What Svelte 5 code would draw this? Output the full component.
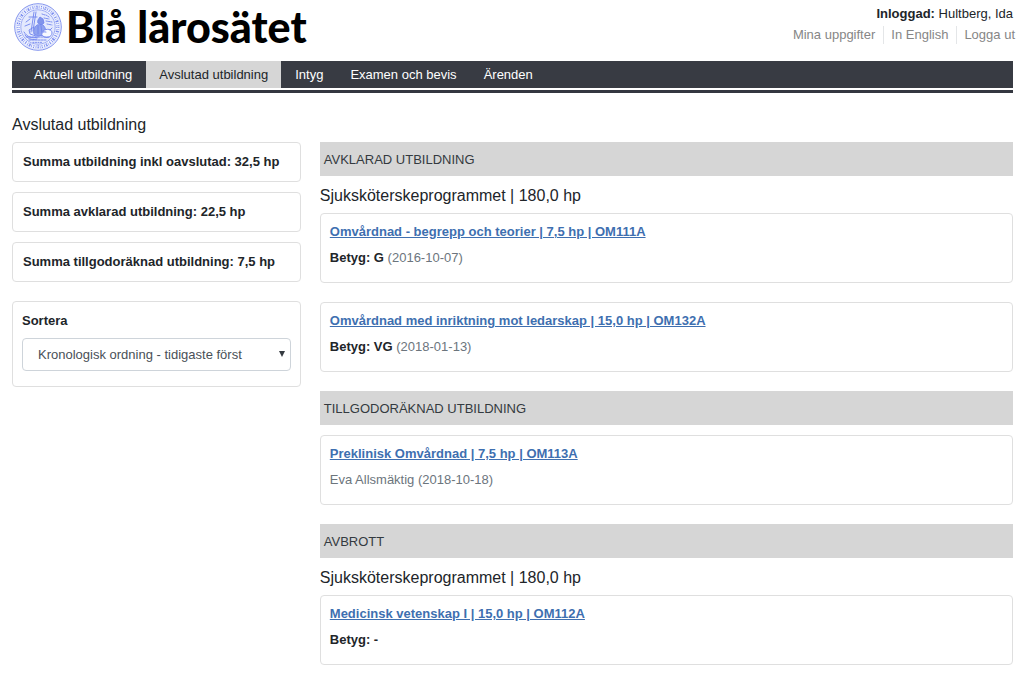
<script lang="ts">
  interface Course {
    title: string;
    grade?: string;
    note?: string;
  }

  interface Section {
    heading: string;
    program?: string;
    courses: Course[];
  }

  const menu = ['Aktuell utbildning', 'Avslutad utbildning', 'Intyg', 'Examen och bevis', 'Ärenden'];
  const userLinks = ['Mina uppgifter', 'In English', 'Logga ut'];

  const totals = [
    'Summa utbildning inkl oavslutad: 32,5 hp',
    'Summa avklarad utbildning: 22,5 hp',
    'Summa tillgodoräknad utbildning: 7,5 hp'
  ];

  const sections: Section[] = [
    {
      heading: 'AVKLARAD UTBILDNING',
      program: 'Sjuksköterskeprogrammet | 180,0 hp',
      courses: [
        { title: 'Omvårdnad - begrepp och teorier | 7,5 hp | OM111A', grade: 'G', note: '(2016-10-07)' },
        { title: 'Omvårdnad med inriktning mot ledarskap | 15,0 hp | OM132A', grade: 'VG', note: '(2018-01-13)' }
      ]
    },
    {
      heading: 'TILLGODORÄKNAD UTBILDNING',
      courses: [{ title: 'Preklinisk Omvårdnad | 7,5 hp | OM113A', note: 'Eva Allsmäktig (2018-10-18)' }]
    },
    {
      heading: 'AVBROTT',
      program: 'Sjuksköterskeprogrammet | 180,0 hp',
      courses: [{ title: 'Medicinsk vetenskap I | 15,0 hp | OM112A', grade: '-' }]
    }
  ];

  let active = $state('Avslutad utbildning');
  let order = $state('first');
</script>

<div class="page">
  <header class="top">
    <div class="brand">
      <svg class="seal" viewBox="0 0 48 48" aria-hidden="true">
        <circle cx="24" cy="24" r="23.3" fill="#f1f4fe" stroke="#8293ee" stroke-width="1" />
        <circle cx="24" cy="24" r="22" fill="none" stroke="#cdd5fa" stroke-width="0.6" />
        <!-- lettering band -->
        <circle cx="24" cy="24" r="19.8" fill="none" stroke="#7a8cf0" stroke-width="3" stroke-dasharray="1 1.3 0.6 0.9 1.6 1.1 0.7 1.5" />
        <circle cx="24" cy="24" r="19.8" fill="none" stroke="#f1f4fe" stroke-width="0.8" stroke-dasharray="2 3" />
        <circle cx="24" cy="24" r="17.2" fill="#e4e9fd" stroke="#8a9bf0" stroke-width="0.8" />
        <g fill="none" stroke="#7084ee" stroke-width="0.9" stroke-linecap="round" stroke-linejoin="round">
          <path d="M20 9 L17 29 M22 9 L19 28 M15 14 h8 M12 19 l4-3 M11 23 l5-2" />
          <path d="M28 11 l3 1 M32 12 l3 2 M30 15 l5 1 M32 18 l6 1 M33 21 l5 1" stroke-dasharray="1.5 1" />
          <path d="M24 17 l2-3 3 2 1 4 -3 2 -3-2z" fill="#8194ea" />
          <path d="M23 22 c-3 2-4 6-3 9 l4 2 6-1 c3-3 2-7-1-10z" fill="#91a3ee" />
          <path d="M20 24 l-5 3 1 4 6 2 M24 23 v8 M27 23 l1 7" />
          <path d="M10 29 c3 5 8 7 14 5 M11 32 c4 5 8 5 12 4" />
          <path d="M29 28 c4-3 9-2 9 2 c0 4-6 6-9 3 c-3-2 0-5 3-4 M36 27 l2-2" fill="#f7f9ff" />
          <path d="M12 34 h24 M15 37 h18" stroke-dasharray="2 1" />
          <path d="M19 39.4 h10" stroke-dasharray="1 1.5" />
        </g>
      </svg>
      <span class="brand-name">Blå lärosätet</span>
    </div>
    <div class="user">
      <div class="user-name"><strong>Inloggad:</strong> Hultberg, Ida</div>
      <ul class="user-links">
        {#each userLinks as link}
          <li><a href="#top">{link}</a></li>
        {/each}
      </ul>
    </div>
  </header>

  <nav class="menu">
    {#each menu as item}
      <a href="#menu" class:active={item === active} onclick={() => (active = item)}>{item}</a>
    {/each}
  </nav>

  <h1>Avslutad utbildning</h1>

  <div class="columns">
    <aside>
      {#each totals as total}
        <div class="box total">{total}</div>
      {/each}

      <div class="box sort">
        <label for="sort-order">Sortera</label>
        <div class="select-wrap">
          <select id="sort-order" bind:value={order}>
            <option value="first">Kronologisk ordning - tidigaste först</option>
            <option value="last">Kronologisk ordning - senaste först</option>
          </select>
          <svg class="arrow" viewBox="0 0 6 6" aria-hidden="true"><path d="M0 0h6L3 6z" fill="#343a40" /></svg>
        </div>
      </div>
    </aside>

    <main>
      {#each sections as section}
        <section>
          <h2>{section.heading}</h2>
          {#if section.program}
            <h3>{section.program}</h3>
          {/if}
          <div class="courses" class:no-program={!section.program}>
            {#each section.courses as course}
              <article class="box course">
                <a href="#course">{course.title}</a>
                <p>
                  {#if course.grade}<strong>Betyg: {course.grade}</strong>{/if}
                  {#if course.note}<span>{course.note}</span>{/if}
                </p>
              </article>
            {/each}
          </div>
        </section>
      {/each}
    </main>
  </div>
</div>

<style>
  :global(body) {
    background: #fff;
  }

  .page {
    padding: 0 10px 11px 12px;
    font-family: 'Liberation Sans', Arial, sans-serif;
    font-size: 13px;
    line-height: 20px;
    color: #212529;
  }

  .top {
    display: flex;
    justify-content: space-between;
    height: 61px;
  }

  .brand {
    display: flex;
    align-items: center;
    gap: 4px;
    height: 54px;
    padding-left: 2px;
  }

  .seal {
    width: 48px;
    height: 48px;
  }

  .brand-name {
    font-family: Lato, sans-serif;
    font-size: 43px;
    font-weight: 900;
    line-height: 54px;
    color: #000;
    white-space: nowrap;
  }

  .user {
    padding-top: 4px;
    text-align: right;
  }

  .user-links {
    display: flex;
    justify-content: flex-end;
    margin: 2px -2px 0 0;
    padding: 0;
    list-style: none;
  }

  .user-links li {
    padding: 0 8px 0 7px;
    line-height: 18px;
    border-left: 1px solid #e4e6e8;
  }

  .user-links li:first-child {
    border-left: 0;
  }

  .user-links li:last-child {
    padding-right: 0;
  }

  .user-links a {
    color: #868686;
    text-decoration: none;
  }

  .menu {
    display: flex;
    gap: 1px;
    padding-left: 9px;
    background: #383b43;
    border-bottom: 2px solid #fff;
    box-shadow: 0 3px 0 #343740;
  }

  .menu a {
    padding: 0 13px;
    line-height: 27px;
    color: #fff;
    text-decoration: none;
  }

  .menu a.active {
    background: #d6d6d6;
    color: #212529;
  }

  h1,
  h3 {
    font-size: 16px;
    font-weight: 400;
    line-height: 20px;
  }

  h1 {
    margin: 25px 0 7px;
  }

  .columns {
    display: grid;
    grid-template-columns: 5fr 12fr;
    gap: 19px;
    align-items: start;
  }

  .box {
    border: 1px solid #dfdfdf;
    border-radius: 4px;
  }

  .total {
    margin-bottom: 10px;
    padding: 9px 10px;
    font-weight: 700;
  }

  .sort {
    margin-top: 19px;
    padding: 9px 9px 15px;
  }

  .sort label {
    display: block;
    margin-bottom: 7px;
    font-weight: 700;
  }

  .select-wrap {
    position: relative;
  }

  select {
    display: block;
    width: 100%;
    height: 33px;
    padding: 0 15px;
    border: 1px solid #ced4da;
    border-radius: 4px;
    background: #fff;
    color: #495057;
    font: inherit;
    appearance: none;
  }

  .arrow {
    position: absolute;
    top: 13px;
    right: 6px;
    width: 6px;
    height: 6px;
    pointer-events: none;
  }

  section {
    margin-bottom: 19px;
  }

  section:last-child {
    margin-bottom: 0;
  }

  h2 {
    margin: 0;
    padding: 8px 4px 6px;
    background: #d6d6d6;
    color: #343a40;
    font-size: 13px;
    font-weight: 400;
    line-height: 20px;
  }

  h3 {
    margin: 10px 0 7px;
  }

  .courses {
    display: flex;
    flex-direction: column;
    gap: 19px;
  }

  .no-program {
    margin-top: 10px;
  }

  .course {
    padding: 8px 9px 14px;
  }

  .course a {
    color: #3e6fb0;
    font-weight: 700;
    text-decoration: underline;
  }

  .course p {
    margin: 6px 0 0;
  }

  .course span {
    color: #6c757d;
  }
</style>
